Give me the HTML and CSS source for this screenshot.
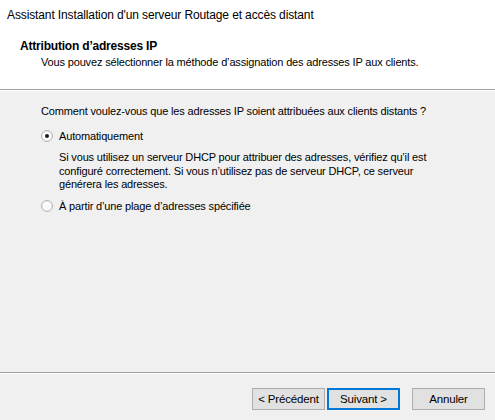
FILE: index.html
```html
<!DOCTYPE html>
<html lang="fr">
<head>
<meta charset="utf-8">
<title>Assistant Installation</title>
<link rel="stylesheet" href="styles.css">
</head>
<body>
<div class="window">
  <div class="titlebar">Assistant Installation d'un serveur Routage et accès distant</div>
  <div class="header">
    <div class="header-title">Attribution d’adresses IP</div>
    <div class="header-sub">Vous pouvez sélectionner la méthode d’assignation des adresses IP aux clients.</div>
  </div>
  <div class="sep"></div>
  <div class="content">
    <div class="question">Comment voulez-vous que les adresses IP soient attribuées aux clients distants ?</div>
    <div class="option">
      <span class="radio checked"></span>
      <span class="label">Automatiquement</span>
    </div>
    <div class="desc">Si vous utilisez un serveur DHCP pour attribuer des adresses, vérifiez qu’il est configuré correctement. Si vous n’utilisez pas de serveur DHCP, ce serveur générera les adresses.</div>
    <div class="option second">
      <span class="radio"></span>
      <span class="label">À partir d’une plage d’adresses spécifiée</span>
    </div>
  </div>
  <div class="sep"></div>
  <div class="footer">
    <div class="btn">&lt; Précédent</div>
    <div class="btn default">Suivant &gt;</div>
    <div class="btn cancel">Annuler</div>
  </div>
</div>
</body>
</html>
```
FILE: styles.css
```css
html, body {
  margin: 0;
  padding: 0;
  background: #f0f0f0;
}
body {
  font-family: "Liberation Sans", Arial, sans-serif;
  font-size: 11px;
  letter-spacing: -0.16px;
  color: #000;
  width: 495px;
  height: 420px;
  overflow: hidden;
}
.window {
  display: flex;
  flex-direction: column;
  height: 420px;
}
.titlebar {
  background: #fff;
  height: 30px;
  line-height: 30px;
  padding-left: 7px;
  font-size: 12px;
  letter-spacing: -0.12px;
  box-sizing: border-box;
}
.header {
  background: #fff;
  height: 59px;
  box-sizing: border-box;
  padding: 9px 0 0 20px;
}
.header-title {
  font-weight: bold;
  font-size: 12px;
  line-height: 14px;
  letter-spacing: -0.2px;
}
.header-sub {
  padding-left: 21px;
  line-height: 14px;
  margin-top: 2px;
}
.sep {
  height: 1px;
  background: #a0a0a0;
  border-bottom: 1px solid #fff;
}
.content {
  flex: 1;
  padding: 13px 0 0 41px;
}
.question {
  line-height: 14px;
}
.option {
  display: flex;
  align-items: center;
  margin-top: 11px;
  height: 14px;
}
.option.second {
  margin-top: 7px;
}
.radio {
  width: 10px;
  height: 10px;
  border-radius: 50%;
  border: 1px solid #b5b5b5;
  background: radial-gradient(circle at 50% 50%, #f4f4f4 0, #ffffff 60%);
  box-shadow: inset 0 0 0 1px #e6e6e6;
  position: relative;
  margin-right: 6px;
  flex: none;
}
.radio.checked::after {
  content: "";
  position: absolute;
  left: 3px;
  top: 3px;
  width: 4px;
  height: 4px;
  border-radius: 50%;
  background: #1a1a1a;
}
.label {
  line-height: 14px;
}
.desc {
  margin: 8px 0 0 18px;
  width: 372px;
  line-height: 13.5px;
}
.footer {
  height: 46px;
  display: flex;
  justify-content: flex-end;
  align-items: flex-start;
  padding: 14px 10px 0 0;
  box-sizing: border-box;
}
.btn {
  width: 73px;
  height: 22px;
  box-sizing: border-box;
  background: #e1e1e1;
  border: 1px solid #adadad;
  display: flex;
  align-items: center;
  justify-content: center;
  font-size: 11.5px;
  margin-left: 2px;
}
.btn.default {
  border: 2px solid #0078d7;
}
.btn.cancel {
  margin-left: 12px;
}
```
